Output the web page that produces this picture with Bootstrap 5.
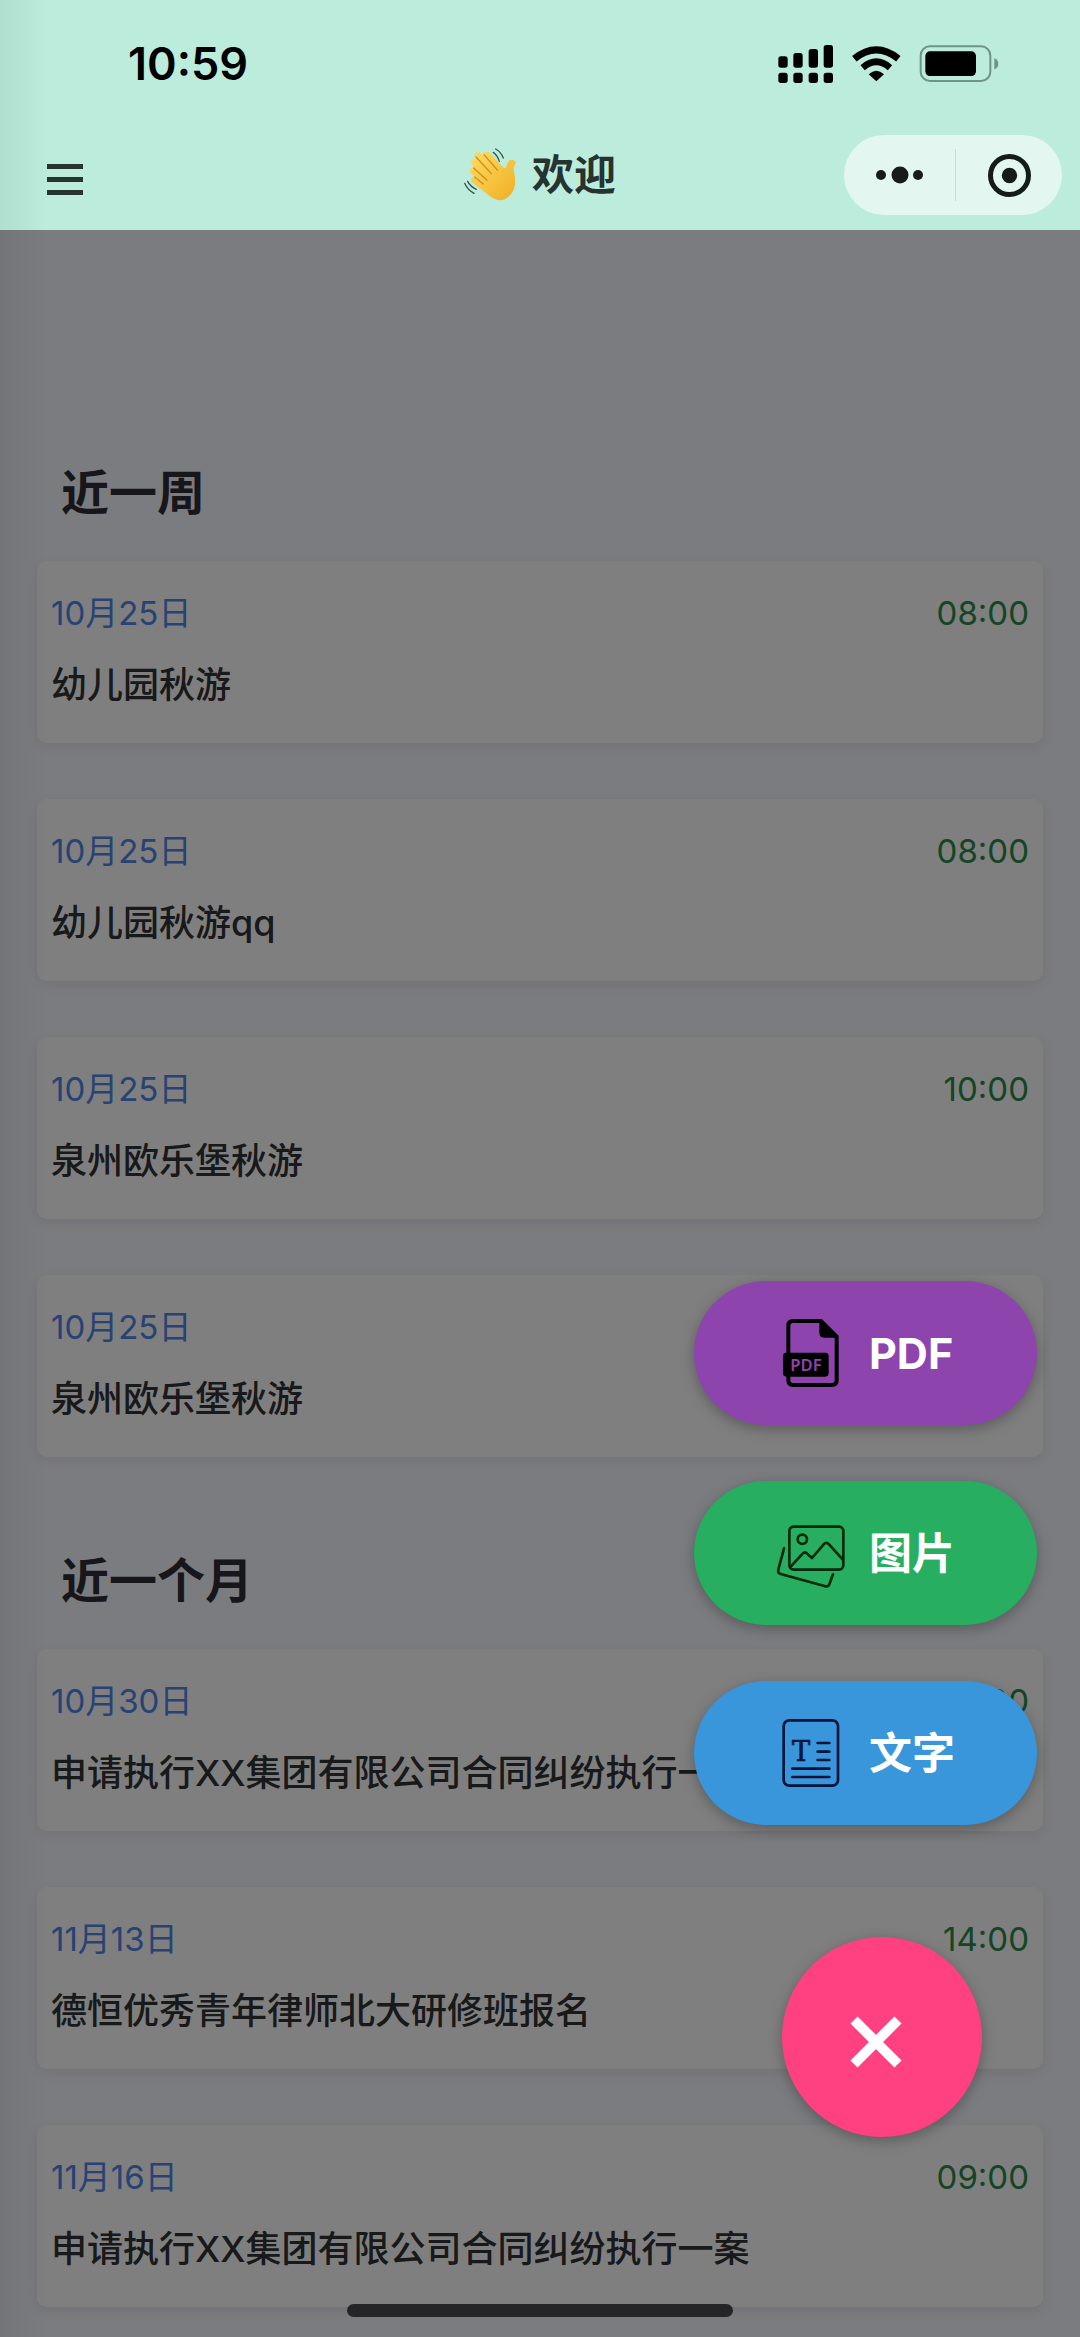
<!DOCTYPE html>
<html lang="zh-CN">
<head>
<meta charset="utf-8">
<meta name="viewport" content="width=device-width, initial-scale=1">
<title>欢迎</title>
<link href="https://cdn.jsdelivr.net/npm/bootstrap@5.3.0/dist/css/bootstrap.min.css" rel="stylesheet">
<style>
  body { font-family: Inter, "Noto Sans CJK SC", sans-serif; background: #f7f8fe; color: #303234; }
  .app { min-height: 100vh; }
  .topbar { background: #bbecdc; color: #26332f; z-index: 3; }
  .status-row { height: 128px; padding: 0 80px 0 128px; color: #000; }
  .clock { font-size: 45px; line-height: 56px; font-weight: 600; }
  .nav-row { height: 102px; padding-bottom: 8px; grid-template-columns: 1fr auto 1fr; }
  .nav-start { padding-left: 47px; }
  .nav-end { padding-right: 18px; }
  .page-title { font-size: 42px; line-height: 56px; font-weight: 700; gap: 16px; }
  .capsule { width: 218px; height: 80px; background: #e4f6f0; }
  .capsule-line { width: 1px; height: 52px; background: #c9dcd6; }
  .list-area { padding: 195px 37px 0; }
  .group-title { font-size: 48px; line-height: 72px; font-weight: 700; padding: 32px 24px; color: #2c2d36; }
  .event { border-radius: 10px; padding: 28px 14px 34px; margin-bottom: 56px; box-shadow: 0 4px 12px rgba(0,0,0,.08); }
  .event-meta { font-size: 33px; line-height: 48px; }
  .event-date { color: #5184e8; }
  .event-time { color: #2b8a48; }
  .event-name { font-size: 36px; line-height: 48px; margin-top: 24px; font-weight: 500; }
  .list-end { padding-bottom: 30px; }
  .shade { background: rgba(0,0,0,.5); z-index: 1; }
  .edge { width: 48px; background: linear-gradient(90deg, rgba(0,0,0,.06), rgba(0,0,0,0)); z-index: 4; pointer-events: none; }
  .actions { right: 43px; bottom: 200px; z-index: 2; }
  .action { width: 343px; height: 144px; padding: 0 0 0 83px; gap: 24px; margin-bottom: 56px; color: #fff;
    font-size: 43px; line-height: 56px; font-weight: 700; box-shadow: 0 4px 14px rgba(0,0,0,.28); }
  .action-pdf { background: #8e44ad; }
  .action-image { background: #27ae60; }
  .action-text { background: #3996db; }
  .close-btn { width: 200px; height: 200px; margin: 56px 55px 0 0; padding: 10px 12px 0 0; background: #ff4181; box-shadow: 0 4px 14px rgba(0,0,0,.28); }
  .home-bar { width: 386px; height: 13px; bottom: 20px; background: #252527; z-index: 3; }
  svg { display: block; overflow: visible; flex: none; }
</style>
</head>
<body>
<div class="app position-relative overflow-hidden">
  <header class="topbar position-relative">
    <div class="status-row d-flex align-items-center justify-content-between">
      <span class="clock">10:59</span>
      <svg width="222" height="40" viewBox="113 131 666 120" aria-hidden="true">
        <rect x="114" y="168" width="28" height="34" rx="8"/><rect x="159" y="158" width="28" height="44" rx="8"/>
        <rect x="205" y="146" width="28" height="56" rx="8"/><rect x="250" y="134" width="28" height="68" rx="8"/>
        <rect x="114" y="217" width="28" height="31" rx="8"/><rect x="159" y="217" width="28" height="31" rx="8"/>
        <rect x="205" y="217" width="28" height="31" rx="8"/><rect x="250" y="217" width="28" height="31" rx="8"/>
        <path d="M342 175Q408 122 474 175" fill="none" stroke="#000" stroke-width="21"/>
        <path d="M367 202Q408 167 449 202" fill="none" stroke="#000" stroke-width="20"/>
        <path d="M385 222Q408 200 431 222L408 243Z"/>
        <rect x="541" y="138" width="209" height="104" rx="28" fill="none" stroke="#6f9387" stroke-width="6"/>
        <rect x="555" y="153" width="152" height="74" rx="14"/>
        <path d="M762 174C778 178 778 203 762 207Z" fill="#6f9387"/>
      </svg>
    </div>
    <div class="nav-row d-grid align-items-center">
      <div class="nav-start">
        <button type="button" class="btn border-0 p-0 pt-2" aria-label="菜单">
          <svg width="36" height="31" viewBox="0 0 36 31" fill="#28352f"><path d="M0 0h36v5H0zM0 13h36v5H0zM0 26h36v5H0z"/></svg>
        </button>
      </div>
      <h1 class="page-title d-flex align-items-center m-0">
        <svg width="52" height="54" viewBox="102 82 156 160" aria-hidden="true">
          <defs><linearGradient id="skin" x1="0" y1="0" x2="1" y2="1"><stop offset="0" stop-color="#ffdc62"/><stop offset="1" stop-color="#efae23"/></linearGradient></defs>
          <path d="M164 94C170 90 176 92 182 98L216 136C222 143 227 143 229 136L232 127C235 118 243 114 252 118C259 121 258 126 253 134C249 141 252 151 254 163C259 190 252 211 237 226C220 242 201 240 184 229L126 184C119 178 122 166 134 168L123 157C115 149 121 137 132 141L126 130C119 120 130 108 140 116L134 106C131 97 142 88 151 96L159 104C156 100 159 96 164 94Z" fill="url(#skin)"/>
          <path d="M162 101L202 147M138 108L184 158M131 141L171 178M134 168L160 189" fill="none" stroke="#d18d1c" stroke-width="4" stroke-linecap="round"/>
          <path d="M197 84Q213 93 220 111M190 94Q202 102 208 121M113 181Q121 197 139 205M104 187Q113 207 132 217" fill="none" stroke="#31554e" stroke-width="4" stroke-linecap="round"/>
        </svg>
        <span>欢迎</span>
      </h1>
      <div class="nav-end d-flex justify-content-end">
        <div class="capsule rounded-pill d-flex align-items-center">
          <button type="button" class="btn border-0 p-0 flex-fill d-flex justify-content-center" aria-label="更多">
            <svg width="48" height="18" viewBox="0 0 48 18" fill="#151c19"><circle cx="5" cy="9" r="5"/><circle cx="24" cy="9" r="8.5"/><circle cx="42" cy="9" r="5"/></svg>
          </button>
          <span class="capsule-line"></span>
          <button type="button" class="btn border-0 p-0 flex-fill d-flex justify-content-center" aria-label="关闭小程序">
            <svg width="43" height="43" viewBox="0 0 43 43"><circle cx="21.5" cy="21.5" r="19" fill="none" stroke="#131c19" stroke-width="5"/><circle cx="21.5" cy="21.5" r="7.7" fill="#131c19"/></svg>
          </button>
        </div>
      </div>
    </div>
  </header>

  <main class="list-area">
    <section>
      <h2 class="group-title m-0">近一周</h2>
      <article class="event card border-0"><div class="event-meta d-flex justify-content-between"><span class="event-date">10月25日</span><time class="event-time">08:00</time></div><div class="event-name">幼儿园秋游</div></article>
      <article class="event card border-0"><div class="event-meta d-flex justify-content-between"><span class="event-date">10月25日</span><time class="event-time">08:00</time></div><div class="event-name">幼儿园秋游qq</div></article>
      <article class="event card border-0"><div class="event-meta d-flex justify-content-between"><span class="event-date">10月25日</span><time class="event-time">10:00</time></div><div class="event-name">泉州欧乐堡秋游</div></article>
      <article class="event card border-0"><div class="event-meta d-flex justify-content-between"><span class="event-date">10月25日</span><time class="event-time">10:00</time></div><div class="event-name">泉州欧乐堡秋游</div></article>
    </section>
    <section class="list-end">
      <h2 class="group-title m-0">近一个月</h2>
      <article class="event card border-0"><div class="event-meta d-flex justify-content-between"><span class="event-date">10月30日</span><time class="event-time">09:00</time></div><div class="event-name">申请执行XX集团有限公司合同纠纷执行一案</div></article>
      <article class="event card border-0"><div class="event-meta d-flex justify-content-between"><span class="event-date">11月13日</span><time class="event-time">14:00</time></div><div class="event-name">德恒优秀青年律师北大研修班报名</div></article>
      <article class="event card border-0 mb-0"><div class="event-meta d-flex justify-content-between"><span class="event-date">11月16日</span><time class="event-time">09:00</time></div><div class="event-name">申请执行XX集团有限公司合同纠纷执行一案</div></article>
    </section>
  </main>

  <div class="shade position-absolute top-0 start-0 w-100 h-100"></div>

  <div class="actions position-absolute d-flex flex-column align-items-end">
    <button type="button" class="action action-pdf btn border-0 rounded-pill d-flex align-items-center">
      <svg width="68" height="68" viewBox="290 180 204 204" aria-hidden="true">
        <path d="M324 290V200Q324 186 338 186H422L469 233V364Q469 378 455 378H338Q324 378 324 364V345" fill="none" stroke="#000" stroke-width="12"/>
        <path d="M417 182L475 236H431Q417 236 417 222Z"/><rect x="308" y="281" width="137" height="72" rx="10"/>
        <text x="377" y="336" text-anchor="middle" font-family="Noto Sans, sans-serif" font-size="50" font-weight="600" fill="#8e44ad">PDF</text>
      </svg>
      <span>PDF</span>
    </button>
    <button type="button" class="action action-image btn border-0 rounded-pill d-flex align-items-center">
      <svg width="68" height="68" viewBox="290 776 204 204" fill="none" stroke="#032a0b" stroke-width="8" stroke-linecap="round" stroke-linejoin="round" aria-hidden="true">
        <rect x="327" y="799" width="162" height="129" rx="13"/><circle cx="366" cy="837" r="14"/>
        <path d="M331 919L367 880Q374 872 381 880L395 893L430 852Q438 843 446 852L487 897M311 864L294 928Q291 938 301 941L435 978Q444 980 447 972L458 942"/>
      </svg>
      <span>图片</span>
    </button>
    <button type="button" class="action action-text btn border-0 rounded-pill d-flex align-items-center">
      <svg width="68" height="68" viewBox="290 296 204 204" aria-hidden="true">
        <g fill="none" stroke="#06143b" stroke-width="8" stroke-linecap="round"><rect x="310" y="300" width="163" height="196" rx="17"/><path d="M412 368H447M412 394H447M412 419H447M336 445H447M336 470H447"/></g>
        <text x="362" y="423" text-anchor="middle" font-family="DejaVu Serif, serif" font-weight="400" font-size="82" fill="#06143b" stroke="#06143b" stroke-width="2">T</text>
      </svg>
      <span>文字</span>
    </button>
    <button type="button" class="close-btn btn border-0 rounded-circle d-flex align-items-center justify-content-center" aria-label="关闭">
      <svg width="52" height="52" viewBox="0 0 52 52" stroke="#fff" stroke-width="10"><path d="M4 4L48 48M48 4L4 48"/></svg>
    </button>
  </div>

  <div class="edge position-absolute top-0 start-0 h-100"></div>
  <div class="home-bar position-absolute start-50 translate-middle-x rounded-pill"></div>
</div>
<script src="https://cdn.jsdelivr.net/npm/bootstrap@5.3.0/dist/js/bootstrap.bundle.min.js"></script>
</body>
</html>
